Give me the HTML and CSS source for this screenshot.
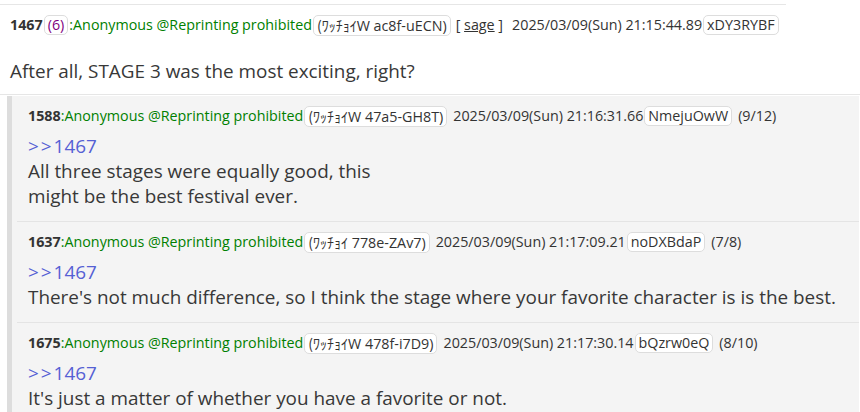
FILE: index.html
```html
<!DOCTYPE html>
<html lang="en">
<head>
<meta charset="utf-8">
<title>Thread</title>
<link rel="stylesheet" href="styles.css">
</head>
<body>
<div class="thread">
  <article class="post-main">
    <div class="post-head">
      <span class="num">1467</span><span class="pill count">(6)</span><span class="name">:Anonymous @Reprinting prohibited</span><span class="pill"><span class="kana">(ﾜｯﾁｮｲ</span>W ac8f-uECN)</span><span class="sage">[ <u>sage</u> ]</span><span class="date">2025/03/09(Sun) 21:15:44.89</span><span class="pill">xDY3RYBF</span>
    </div>
    <div class="post-body main-body">After all, STAGE 3 was the most exciting, right?</div>
  </article>
  <div class="replies-wrap">
    <div class="replies">
      <article class="reply">
        <div class="post-head">
          <span class="num">1588</span><span class="name">:Anonymous @Reprinting prohibited</span><span class="pill"><span class="kana">(ﾜｯﾁｮｲ</span>W 47a5-GH8T)</span><span class="date">2025/03/09(Sun) 21:16:31.66</span><span class="pill">NmejuOwW</span><span class="ratio">(9/12)</span>
        </div>
        <div class="post-body"><a class="anchor"><span class="gt">&gt;&gt;</span>1467</a><br>All three stages were equally good, this<br>might be the best festival ever.</div>
      </article>
      <article class="reply">
        <div class="post-head">
          <span class="num">1637</span><span class="name">:Anonymous @Reprinting prohibited</span><span class="pill"><span class="kana">(ﾜｯﾁｮｲ</span> 778e-ZAv7)</span><span class="date">2025/03/09(Sun) 21:17:09.21</span><span class="pill">noDXBdaP</span><span class="ratio">(7/8)</span>
        </div>
        <div class="post-body"><a class="anchor"><span class="gt">&gt;&gt;</span>1467</a><br>There's not much difference, so I think the stage where your favorite character is is the best.</div>
      </article>
      <article class="reply">
        <div class="post-head">
          <span class="num">1675</span><span class="name">:Anonymous @Reprinting prohibited</span><span class="pill"><span class="kana">(ﾜｯﾁｮｲ</span>W 478f-i7D9)</span><span class="date">2025/03/09(Sun) 21:17:30.14</span><span class="pill">bQzrw0eQ</span><span class="ratio">(8/10)</span>
        </div>
        <div class="post-body"><a class="anchor"><span class="gt">&gt;&gt;</span>1467</a><br>It's just a matter of whether you have a favorite or not.</div>
      </article>
    </div>
  </div>
</div>
</body>
</html>
```

FILE: styles.css
```css
html, body {
  margin: 0;
  padding: 0;
  background: #ffffff;
}
body {
  font-family: "Open Sans", "Noto Sans", "Noto Sans CJK JP", sans-serif;
  color: #333333;
}
.thread {
  padding-top: 4px;
}
.post-main {
  width: 786px;
  border-top: 1px solid #e6e6e6;
  padding: 10px 0 10px 10px;
  box-sizing: border-box;
}
.post-head {
  font-size: 14.3px;
  line-height: 20px;
  height: 20px;
  white-space: nowrap;
  color: #333333;
}
.num {
  font-weight: 700;
  color: #333333;
}
.name {
  color: #008000;
}
.pill {
  display: inline-block;
  border: 1px solid #dddddd;
  border-radius: 5px;
  background: #ffffff;
  padding: 0 3px;
  line-height: 18px;
  margin: 0 1px;
  vertical-align: top;
}
.count {
  color: #800080;
}
.kana {
  font-family: "Noto Sans CJK JP", sans-serif;
  font-size: 14px;
}
.sage {
  margin: 0 4px;
}
.date {
  margin-left: 5px;
}
.ratio {
  margin-left: 5px;
}
.post-body {
  font-size: 18.9px;
  line-height: 25px;
  margin-top: 8px;
  color: #383838;
}
.main-body {
  margin-top: 24px;
}
.replies-wrap {
  border-top: 1px solid #e6e6e6;
  padding-top: 1px;
}
.replies {
  margin: 0 1px 0 7px;
  border-left: 5px solid #dddddd;
  background: #f4f4f4;
}
.reply {
  margin-left: 5px;
  padding: 10px 16px 12px 11px;
  border-top: 1px solid #e4e4e4;
}
.reply:first-child {
  border-top: 0;
}
.anchor {
  color: #5560d4;
}
.gt {
  letter-spacing: 2px;
}
```
